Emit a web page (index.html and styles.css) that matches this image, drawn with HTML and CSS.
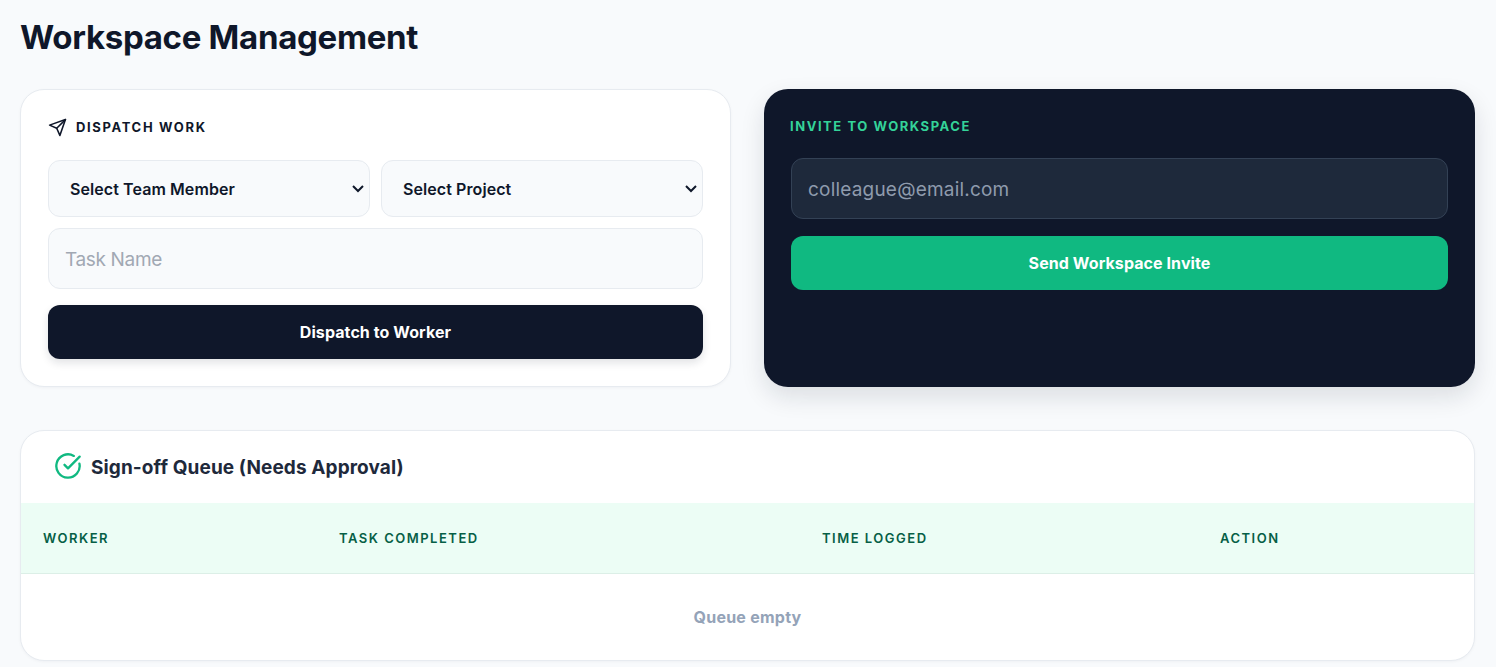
FILE: index.html
```html
<!DOCTYPE html>
<html lang="en">
<head>
<meta charset="utf-8">
<title>Workspace Management</title>
<link rel="stylesheet" href="styles.css">
</head>
<body>
<main class="page">
  <h1 class="page-title">Workspace Management</h1>
  <section class="panels">
    <form class="card dispatch">
      <h2 class="eyebrow">
        <svg class="send-icon" viewBox="0 0 24 24" fill="none" stroke="currentColor" stroke-width="2" stroke-linecap="round" stroke-linejoin="round"><path d="m22 2-7 20-4-9-9-4Z"/><path d="M22 2 11 13"/></svg>
        DISPATCH WORK
      </h2>
      <div class="select-row">
        <select class="field select"><option>Select Team Member</option></select>
        <select class="field select"><option>Select Project</option></select>
      </div>
      <input class="field text-input" type="text" placeholder="Task Name">
      <button class="btn btn-dark" type="button">Dispatch to Worker</button>
    </form>
    <form class="card invite">
      <h2 class="eyebrow eyebrow-green">INVITE TO WORKSPACE</h2>
      <input class="field text-input dark-input" type="email" placeholder="colleague@email.com">
      <button class="btn btn-green" type="button">Send Workspace Invite</button>
    </form>
  </section>
  <section class="card queue">
    <h2 class="queue-title">
      <svg class="check-icon" viewBox="0 0 24 24" fill="none" stroke="currentColor" stroke-width="2" stroke-linecap="round" stroke-linejoin="round"><path d="M21.801 10A10 10 0 1 1 17 3.335"/><path d="m9 11 3 3L22 4"/></svg>
      Sign-off Queue (Needs Approval)
    </h2>
    <table class="queue-table">
      <colgroup><col class="col-worker"><col class="col-task"><col class="col-time"><col></colgroup>
      <thead><tr><th>WORKER</th><th>TASK COMPLETED</th><th>TIME LOGGED</th><th>ACTION</th></tr></thead>
      <tbody><tr><td class="empty" colspan="4">Queue empty</td></tr></tbody>
    </table>
  </section>
</main>
</body>
</html>
```
FILE: styles.css
```css
* { box-sizing: border-box; }
html, body { margin: 0; }
body {
  background: #f8fafc;
  color: #0f172a;
  font-family: Inter, "Noto Sans", sans-serif;
  height: 667px;
  overflow: hidden;
}
.page { padding: 15px 21px 0 20px; }
.page-title {
  margin: 0 0 30px;
  font-size: 33px;
  line-height: 44px;
  font-weight: 700;
  letter-spacing: -0.3px;
}
.panels {
  display: grid;
  grid-template-columns: 1fr 1fr;
  gap: 33px;
  margin-bottom: 43px;
}
.card {
  background: #fff;
  border: 1px solid #e7ebf0;
  border-radius: 24px;
  box-shadow: 0 1px 3px rgba(15, 23, 42, 0.04);
}
.dispatch {
  display: flex;
  flex-direction: column;
  height: 298px;
  padding: 27px;
}
.invite {
  display: flex;
  flex-direction: column;
  height: 298px;
  padding: 27px 27px 0;
  background: #0f172a;
  border: 0;
  box-shadow: 0 10px 24px rgba(15, 23, 42, 0.12);
}
.eyebrow {
  display: flex;
  align-items: center;
  gap: 9px;
  height: 20px;
  margin: 0 0 23px;
  font-size: 13px;
  font-weight: 700;
  letter-spacing: 1.65px;
}
.eyebrow-green {
  height: 20px;
  margin: 0 0 22px -1px;
  color: #34d399;
  letter-spacing: 1.55px;
}
.send-icon { width: 19px; height: 19px; }
.select-row {
  display: grid;
  grid-template-columns: 1fr 1fr;
  gap: 11px;
  margin-bottom: 11px;
}
.field {
  width: 100%;
  background-color: #f8fafc;
  border: 1px solid #e7ebf0;
  border-radius: 12px;
  font-family: inherit;
  outline: none;
}
.select {
  appearance: none;
  height: 57px;
  padding: 0 24px 0 21px;
  background-image: url("data:image/svg+xml,%3Csvg xmlns='http://www.w3.org/2000/svg' width='14' height='9' viewBox='0 0 14 9'%3E%3Cpath d='M2 2l5 5 5-5' fill='none' stroke='%230f172a' stroke-width='2'/%3E%3C/svg%3E");
  background-repeat: no-repeat;
  background-position: right 4px center;
  color: #0f172a;
  font-size: 16px;
  font-weight: 600;
  letter-spacing: 0.08px;
}
.text-input {
  height: 61px;
  padding: 2px 16px 0;
  font-size: 19px;
  letter-spacing: -0.35px;
}
.text-input::placeholder { color: #a1a8b3; opacity: 1; }
.dark-input {
  background-color: #1e293b;
  border-color: #334155;
  color: #fff;
  letter-spacing: 0.2px;
}
.dark-input::placeholder { color: #8f9bad; }
.btn {
  display: block;
  width: 100%;
  height: 54px;
  border: 0;
  border-radius: 12px;
  color: #fff;
  font-family: inherit;
  font-size: 16px;
  font-weight: 700;
  letter-spacing: 0.08px;
}
.btn-dark {
  margin-top: 16px;
  background: #0f172a;
  box-shadow: 0 4px 8px rgba(15, 23, 42, 0.12);
}
.btn-green {
  margin-top: 17px;
  background: #10b981;
}
.queue { height: 231px; overflow: hidden; }
.queue-title {
  display: flex;
  align-items: center;
  gap: 9px;
  height: 72px;
  margin: 0;
  padding-left: 33px;
  color: #1e293b;
  font-size: 19px;
  font-weight: 700;
  letter-spacing: 0.1px;
}
.check-icon { width: 28px; height: 28px; margin-bottom: 2px; color: #10b981; }
.queue-table {
  width: 100%;
  border-collapse: collapse;
  table-layout: fixed;
}
.col-worker { width: 296px; }
.col-task { width: 483px; }
.col-time { width: 398px; }
.queue-table th {
  height: 70px;
  padding: 0 22px;
  background: #ecfdf5;
  border-bottom: 1px solid #dcefe7;
  color: #065f46;
  font-size: 13px;
  font-weight: 600;
  letter-spacing: 1.5px;
  text-align: left;
}
.empty {
  height: 87px;
  color: #94a3b8;
  font-size: 16px;
  font-weight: 700;
  letter-spacing: 0.25px;
  text-align: center;
}
```
